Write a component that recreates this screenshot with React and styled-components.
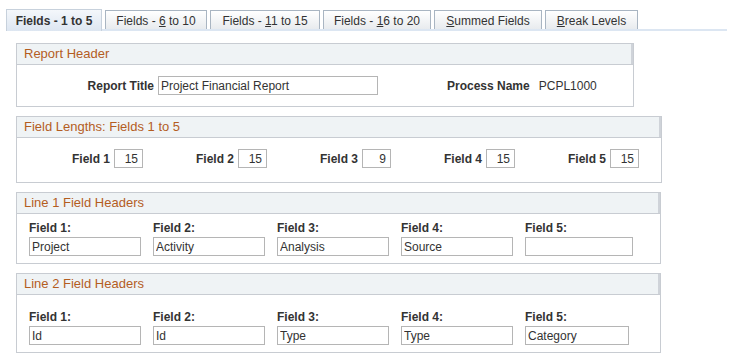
import styled, { createGlobalStyle } from 'styled-components';

const GlobalStyle = createGlobalStyle`
  html, body {
    margin: 0;
    padding: 0;
    background: #ffffff;
  }
  body {
    font-family: "Liberation Sans", Arial, sans-serif;
    font-size: 12px;
    color: #333333;
  }
`

const Page = styled.div`
  width: 741px;
  height: 361px;
  overflow: hidden;
  padding-top: 9px;
  box-sizing: border-box;
`

const TabBar = styled.div`
  display: flex;
  align-items: flex-end;
  gap: 3px;
  margin-left: 6px;
  width: 721px;
  height: 20px;
  border-bottom: 2px solid #dce6f2;
`

const Tab = styled.div`
  box-sizing: border-box;
  width: ${p => p.$width}px;
  height: ${p => (p.$active ? '22px' : '19px')};
  margin-bottom: ${p => (p.$active ? '-2px' : '0')};
  display: flex;
  align-items: center;
  justify-content: center;
  white-space: pre;
  border: 1px solid ${p => (p.$active ? '#c7d1dc' : '#a9b5c2')};
  border-bottom: none;
  background: ${p => (p.$active
    ? 'linear-gradient(#f4f7fb, #dde6f1)'
    : 'linear-gradient(#ffffff, #e8ebee)')};
  font-weight: ${p => (p.$active ? 'bold' : 'normal')};
  color: #333333;
  padding-top: ${p => (p.$active ? '0' : '1px')};
`

const Sections = styled.div`
  display: flex;
  flex-direction: column;
  gap: 9px;
  margin: 12px 0 0 16px;
`

const Section = styled.div`
  width: ${p => p.$width}px;
  box-sizing: border-box;
  border: 1px solid #c8ccd2;
`

const SectionHeader = styled.div`
  height: 20px;
  line-height: 20px;
  padding-left: 7px;
  font-size: 13px;
  color: #b45d1f;
  background: #eff3f5;
  border-bottom: 1px solid #c8ccd2;
  box-shadow: inset -2px 0 0 #cfd3d9;
`

const HeaderRow = styled.div`
  height: 41px;
  display: flex;
  align-items: center;
`

const RowLabel = styled.span`
  font-weight: bold;
  width: ${p => p.$width || 'auto'};
  text-align: right;
  margin-right: 4px;
  margin-left: ${p => p.$offset || 0}px;
`

const ValueText = styled.span`
  margin-left: 5px;
`

const Input = styled.input`
  box-sizing: border-box;
  width: ${p => p.$width}px;
  height: 19px;
  border: 1px solid #b5b5b5;
  padding: 0 ${p => (p.$align === 'right' ? '4px' : '2px')};
  font-family: "Liberation Sans", Arial, sans-serif;
  font-size: 12px;
  color: #333333;
  text-align: ${p => p.$align || 'left'};
  background: #ffffff;
  outline: none;
  margin: 0;
`

const LengthRow = styled.div`
  display: grid;
  grid-template-columns: repeat(5, 124px);
  padding: 11px 0 14px 2px;
`

const LengthCell = styled.div`
  display: flex;
  justify-content: flex-end;
  align-items: center;
`

const HeaderGrid = styled.div`
  display: grid;
  grid-template-columns: repeat(5, 124px);
  padding: ${p => p.$top}px 0 7px 12px;
`

const HeaderCell = styled.div`
  display: flex;
  flex-direction: column;
  gap: 2px;
`

const CellLabel = styled.div`
  font-weight: bold;
  line-height: 14px;
`

const tabs = [
  { label: <>Fields - 1 to 5</>, width: 96, active: true },
  { label: <>Fields - <u>6</u> to 10</>, width: 102 },
  { label: <>Fields - <u>1</u>1 to 15</>, width: 110 },
  { label: <>Fields - <u>1</u>6 to 20</>, width: 108 },
  { label: <><u>S</u>ummed Fields</>, width: 108 },
  { label: <><u>B</u>reak Levels</>, width: 93 },
]

const lengths = ['15', '15', '9', '15', '15']
const line1 = ['Project', 'Activity', 'Analysis', 'Source', '']
const line2 = ['Id', 'Id', 'Type', 'Type', 'Category']

function FieldHeaders({ title, values, top, lastWidth }) {
  return (
    <Section $width={645}>
      <SectionHeader>{title}</SectionHeader>
      <HeaderGrid $top={top}>
        {values.map((v, i) => (
          <HeaderCell key={i}>
            <CellLabel>Field {i + 1}:</CellLabel>
            <Input $width={i === 4 ? lastWidth : 112} value={v} readOnly />
          </HeaderCell>
        ))}
      </HeaderGrid>
    </Section>
  )
}

export default function App() {
  return (
    <Page>
      <GlobalStyle />
      <TabBar>
        {tabs.map((t, i) => (
          <Tab key={i} $width={t.width} $active={t.active}><span>{t.label}</span></Tab>
        ))}
      </TabBar>
      <Sections>
        <Section $width={618}>
          <SectionHeader>Report Header</SectionHeader>
          <HeaderRow>
            <RowLabel $width="137px">Report Title</RowLabel>
            <Input $width={220} value="Project Financial Report" readOnly />
            <RowLabel $offset={69}>Process Name</RowLabel>
            <ValueText>PCPL1000</ValueText>
          </HeaderRow>
        </Section>

        <Section $width={646}>
          <SectionHeader>Field Lengths: Fields 1 to 5</SectionHeader>
          <LengthRow>
            {lengths.map((v, i) => (
              <LengthCell key={i}>
                <RowLabel>Field {i + 1}</RowLabel>
                <Input $width={29} $align="right" value={v} readOnly />
              </LengthCell>
            ))}
          </LengthRow>
        </Section>

        <FieldHeaders title="Line 1 Field Headers" values={line1} top={7} lastWidth={108} />
        <FieldHeaders title="Line 2 Field Headers" values={line2} top={15} lastWidth={104} />
      </Sections>
    </Page>
  )
}
